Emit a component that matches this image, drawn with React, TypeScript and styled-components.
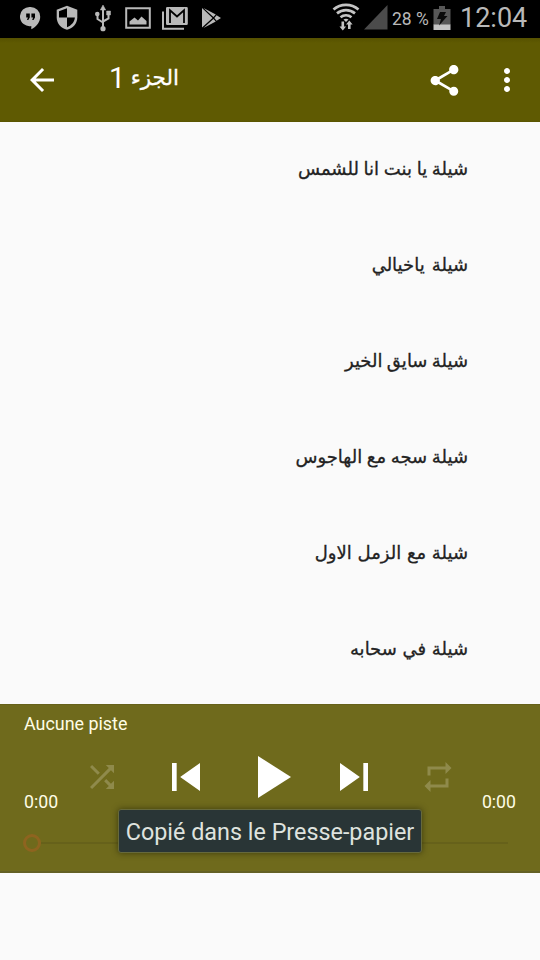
import React from "react";
import styled, { createGlobalStyle } from "styled-components";

const GlobalStyle = createGlobalStyle`
  * { box-sizing: border-box; }
  body { margin: 0; background: #fafafa; }
`;

const Screen = styled.div`
  position: relative;
  width: 540px;
  height: 960px;
  display: flex;
  flex-direction: column;
  overflow: hidden;
  background: #fafafa;
  font-family: Roboto, "DejaVu Sans", sans-serif;
`;

const StatusBar = styled.div`
  height: 38px;
  flex: none;
  display: flex;
  align-items: center;
  justify-content: space-between;
  padding: 0 13px 2px 20px;
  background: #000;
  color: #b9b9b9;
`;

const StatusIcons = styled.div`
  display: flex;
  align-items: center;
  gap: 10px;
`;

const StatusInfo = styled.div`
  display: flex;
  align-items: center;
`;

const IconSlot = styled.span<{ $left?: number; $bottom?: number }>`
  display: flex;
  margin-left: ${(p) => p.$left ?? 0}px;
  margin-bottom: ${(p) => p.$bottom ?? 0}px;
`;

const Battery = styled.span`
  width: 38px;
  font-size: 17.5px;
  line-height: 36px;
  margin: 2px 3px 0 4px;
  white-space: nowrap;
`;

const Clock = styled.span`
  font-size: 27px;
  line-height: 36px;
  margin: 0 0 0 9px;
  width: 67px;
  white-space: nowrap;
`;

const AppBar = styled.header`
  height: 84px;
  flex: none;
  display: flex;
  align-items: center;
  padding: 0 15px 0 24px;
  background: linear-gradient(#565100, #5f5a02 5px, #5f5a02 82px, #585300);
  color: #fff;
`;

const AppTitle = styled.h1`
  flex: 1;
  margin: 0 0 5px 49px;
  font-size: 21.5px;
  line-height: 40px;
  font-weight: 400;
  direction: rtl;
  text-align: left;
  -webkit-text-stroke: 0.3px currentColor;
`;

const TitleNumber = styled.span`
  font-size: 29px;
  line-height: 1;
  position: relative;
  top: 3px;
  -webkit-text-stroke: 0;
`;

const IconButton = styled.button<{ $gap?: number }>`
  display: flex;
  padding: 0;
  margin-left: ${(p) => p.$gap ?? 0}px;
  border: 0;
  background: none;
  color: inherit;
`;

const TrackList = styled.ul`
  height: 582px;
  flex: none;
  margin: 0;
  padding: 0;
  list-style: none;
  overflow: hidden;
`;

const Track = styled.li<{ $spacing: number }>`
  height: 96px;
  padding: 0 72px;
  direction: rtl;
  font-family: "DejaVu Sans", sans-serif;
  font-size: 18px;
  line-height: 93px;
  word-spacing: ${(p) => p.$spacing}px;
  color: #222;
  -webkit-text-stroke: 0.3px currentColor;
`;

const Player = styled.section`
  height: 169px;
  flex: none;
  display: flex;
  flex-direction: column;
  background: #6f6a1c;
  border-top: 1px solid #66611a;
  border-bottom: 2px solid #636024;
  color: #fff;
`;

const NowPlaying = styled.div`
  height: 36px;
  padding-left: 24px;
  font-size: 17.9px;
  line-height: 38px;
  color: #fffde6;
`;

const Controls = styled.div`
  height: 72px;
  display: grid;
  grid-template-columns: 60px repeat(5, 84px) 60px;
`;

const Control = styled.button<{ $dim?: boolean }>`
  display: flex;
  align-items: center;
  justify-content: center;
  padding: 0;
  border: 0;
  background: none;
  color: ${(p) => (p.$dim ? "#8f8a4b" : "#fff")};
`;

const Time = styled.span<{ $end?: boolean }>`
  align-self: end;
  padding: ${(p) => (p.$end ? "0 24px 0 0" : "0 0 0 24px")};
  direction: ${(p) => (p.$end ? "rtl" : "ltr")};
  font-size: 17.7px;
  line-height: 22px;
  color: #fffde6;
  white-space: nowrap;
`;

const Seek = styled.div`
  height: 58px;
  display: flex;
  align-items: center;
  padding: 2px 32px 0 23px;
`;

const Thumb = styled.span`
  width: 18px;
  height: 18px;
  border: 3px solid #8e641f;
  border-radius: 50%;
`;

const Rail = styled.span`
  flex: 1;
  height: 2px;
  background: #66611a;
`;

const Toast = styled.div`
  position: absolute;
  left: 118px;
  top: 809px;
  width: 304px;
  height: 44px;
  border: 1px solid #66693c;
  border-radius: 3px;
  background: #293536;
  box-shadow: 0 0 6px rgba(30, 30, 0, 0.6);
  color: #dfe3df;
  font-size: 23.35px;
  line-height: 44px;
  text-align: center;
  white-space: nowrap;
`;

const Glyph = ({ d, size }: { d: string; size: number }) => (
  <svg width={size} height={size} viewBox="0 0 24 24" fill="currentColor">
    <path d={d} />
  </svg>
);

const paths = {
  back: "M20 11H7.83l5.59-5.59L12 4l-8 8 8 8 1.41-1.41L7.83 13H20v-2z",
  share:
    "M18 16.08c-.76 0-1.44.3-1.96.77L8.91 12.7c.05-.23.09-.46.09-.7s-.04-.47-.09-.7l7.05-4.11c.54.5 1.25.81 2.04.81 1.66 0 3-1.34 3-3s-1.34-3-3-3-3 1.34-3 3c0 .24.04.47.09.7L8.04 9.81C7.5 9.31 6.79 9 6 9c-1.66 0-3 1.34-3 3s1.34 3 3 3c.79 0 1.5-.31 2.04-.81l7.12 4.16c-.05.21-.08.43-.08.65 0 1.61 1.31 2.92 2.92 2.92s2.92-1.31 2.92-2.92-1.31-2.92-2.92-2.92z",
  more: "M12 8c1.1 0 2-.9 2-2s-.9-2-2-2-2 .9-2 2 .9 2 2 2zm0 2c-1.1 0-2 .9-2 2s.9 2 2 2 2-.9 2-2-.9-2-2-2zm0 6c-1.1 0-2 .9-2 2s.9 2 2 2 2-.9 2-2-.9-2-2-2z",
  shuffle:
    "M10.59 9.17L5.41 4 4 5.41l5.17 5.17 1.42-1.41zM14.5 4l2.04 2.04L4 18.59 5.41 20 17.96 7.46 20 9.5V4h-5.5zm.33 9.41l-1.41 1.41 3.13 3.13L14.5 20H20v-5.5l-2.04 2.04-3.13-3.13z",
  previous: "M6 6h2v12H6zm3.5 6l8.5 6V6z",
  play: "M8 5v14l11-7z",
  next: "M6 18l8.5-6L6 6v12zM16 6v12h2V6h-2z",
  repeat: "M7 7h10v3l4-4-4-4v3H5v6h2V7zm10 10H7v-3l-4 4 4 4v-3h12v-6h-2v4z",
};

const Hangouts = () => (
  <svg width="21" height="26" viewBox="0 0 21 26">
    <path d="M10.5 2a9.7 9.7 0 0 1 9.7 9.7c0 5.3-3.6 9.900-8.900 12.500v-3.200A9.600 9.600 0 1 1 10.500 2z" fill="#b9b9b9" />
    <path d="M6.200 8.500h3.600v3.900l-1.500 2.600H7l.9-2.600H6.200zM11.400 8.500H15v3.900l-1.500 2.600h-1.300l.9-2.600h-1.700z" fill="#000" />
  </svg>
);

const Shield = () => (
  <svg width="22" height="26" viewBox="0 0 22 26">
    <path d="M11 .7l10.300 4v7.500c0 6-4 10.800-10.300 12.600C4.700 23 .7 18.200.7 12.200V4.700z" fill="#b9b9b9" />
    <path d="M11 3.200v9.300h7.900c-.5 4.700-3.500 8-7.900 9.700v-9.700H3V6.300z" fill="#000" />
  </svg>
);

const Usb = () => (
  <svg width="18" height="28" viewBox="0 0 18 28" fill="#b9b9b9" stroke="#b9b9b9">
    <path d="M9 5v19M3.500 10v5L9 18.500M14.500 9v5.500L9 17.500" fill="none" strokeWidth="2" />
    <path d="M9 1l2.700 5H6.300zM12.600 7h3.900v4h-3.900z" strokeWidth=".5" />
    <circle cx="3.300" cy="10" r="2.300" stroke="none" />
    <circle cx="9" cy="24.700" r="2.600" stroke="none" />
  </svg>
);

const Picture = () => (
  <svg width="26" height="22" viewBox="0 0 26 22">
    <path d="M1.200 1.200h23.600v19.600H1.200z" fill="none" stroke="#b9b9b9" strokeWidth="2" />
    <path d="M4.500 17.500v-3l5-4 3.500 3 3.500-4 5 4.500v3.500z" fill="#b9b9b9" />
  </svg>
);

const Mail = () => (
  <svg width="26" height="24" viewBox="0 0 26 24">
    <path d="M1 5.500v17.200h21" fill="none" stroke="#b9b9b9" strokeWidth="2" />
    <path d="M6 1h18.500a1.300 1.300 0 0 1 1.300 1.300v15.400a1.300 1.300 0 0 1-1.300 1.300H5.300a1.300 1.300 0 0 1-1.300-1.300V2.300A1.300 1.300 0 0 1 5.300 1z" fill="#b9b9b9" />
    <path d="M8 17V4.300l7 6.200 7-6.200V17" fill="none" stroke="#000" strokeWidth="1.800" />
  </svg>
);

const PlayStore = () => (
  <svg width="21" height="22" viewBox="0 0 21 22">
    <path d="M1 1v19.500L11.500 11zM2.500 1l9.900 9 2.400-2.400zM2.500 21l9.900-9 2.400 2.400zM15.600 8.200L13.300 11l2.300 2.800 4.400-2.800z" fill="#b9b9b9" />
  </svg>
);

const Wifi = () => (
  <svg width="28" height="28" viewBox="0 0 28 28">
    <g fill="none" stroke="#c4c4c4" strokeWidth="2.700">
      <path d="M1.500 6.500a19 19 0 0 1 25 0M5 10.400a14 14 0 0 1 18 0M8.500 14.200a9 9 0 0 1 11 0" />
    </g>
    <path d="M11.500 16.500q2.500-1.500 5 0L14 19zM9.500 18.500h2.600v5h2l-3.300 4-3.300-4h2zM16 26v-4.500h-2l3.300-4 3.300 4h-2V26z" fill="#c4c4c4" />
  </svg>
);

const Signal = () => (
  <svg width="24" height="25" viewBox="0 0 24 25">
    <path d="M23.500 0v24.500H0z" fill="#4b4b4b" />
  </svg>
);

const BatteryIcon = () => (
  <svg width="18" height="26" viewBox="0 0 18 26">
    <path d="M6 1h6v3h5.500v16H.5V4H6z" fill="#575757" />
    <path d="M.5 19.500h17V25H.5z" fill="#c4c4c4" />
    <path d="M7 7h6l-2 4h3.500L6 20.500l2-6.500H4z" fill="#0a0a0a" />
  </svg>
);

const tracks = [
  { name: "شيلة يا بنت انا للشمس", spacing: -1 },
  { name: "شيلة ياخيالي", spacing: 1.5 },
  { name: "شيلة سايق الخير", spacing: -1.3 },
  { name: "شيلة سجه مع الهاجوس", spacing: -1 },
  { name: "شيلة مع الزمل الاول", spacing: 0 },
  { name: "شيلة في سحابه", spacing: 0 },
];

export default function App() {
  return (
    <Screen>
      <GlobalStyle />
      <StatusBar>
        <StatusIcons>
          <Hangouts />
          <IconSlot $left={5}><Shield /></IconSlot>
          <IconSlot $left={6}><Usb /></IconSlot>
          <IconSlot $left={3}><Picture /></IconSlot>
          <IconSlot $left={1}><Mail /></IconSlot>
          <IconSlot $left={3}><PlayStore /></IconSlot>
        </StatusIcons>
        <StatusInfo>
          <IconSlot $bottom={3}><Wifi /></IconSlot>
          <IconSlot $left={4} $bottom={1}><Signal /></IconSlot>
          <Battery>28 %</Battery>
          <IconSlot $bottom={1}><BatteryIcon /></IconSlot>
          <Clock>12:04</Clock>
        </StatusInfo>
      </StatusBar>
      <AppBar>
        <IconButton aria-label="Retour"><Glyph d={paths.back} size={36} /></IconButton>
        <AppTitle>الجزء <TitleNumber>1</TitleNumber></AppTitle>
        <IconButton aria-label="Partager"><Glyph d={paths.share} size={37} /></IconButton>
        <IconButton aria-label="Menu" $gap={26}><Glyph d={paths.more} size={36} /></IconButton>
      </AppBar>
      <TrackList>
        {tracks.map((t) => <Track key={t.name} $spacing={t.spacing}>{t.name}</Track>)}
      </TrackList>
      <Player>
        <NowPlaying>Aucune piste</NowPlaying>
        <Controls>
          <Time>0:00</Time>
          <Control $dim aria-label="Aléatoire"><Glyph d={paths.shuffle} size={36} /></Control>
          <Control aria-label="Précédent"><Glyph d={paths.previous} size={56} /></Control>
          <Control aria-label="Lecture"><Glyph d={paths.play} size={72} /></Control>
          <Control aria-label="Suivant"><Glyph d={paths.next} size={56} /></Control>
          <Control $dim aria-label="Répéter"><Glyph d={paths.repeat} size={36} /></Control>
          <Time $end>0:00</Time>
        </Controls>
        <Seek><Thumb /><Rail /></Seek>
      </Player>
      <Toast>Copié dans le Presse-papier</Toast>
    </Screen>
  );
}
